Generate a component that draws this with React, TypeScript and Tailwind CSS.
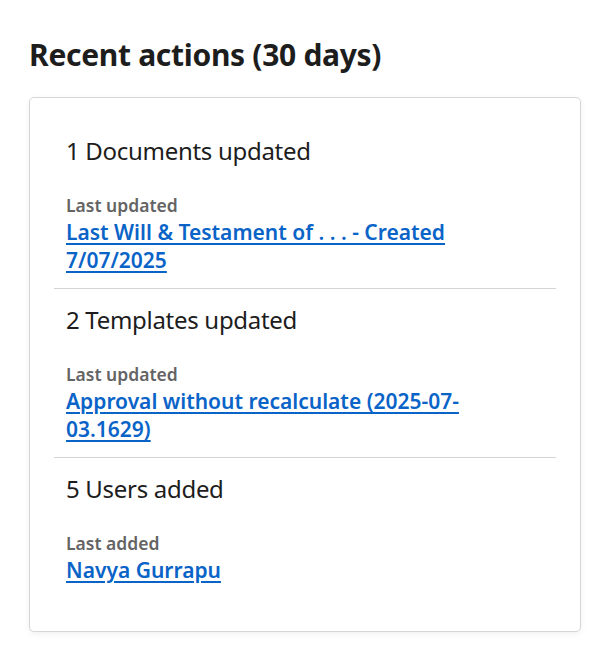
const sections = [
  {
    title: "1 Documents updated",
    label: "Last updated",
    lines: ["Last Will & Testament of . . . - Created", "7/07/2025"],
  },
  {
    title: "2 Templates updated",
    label: "Last updated",
    lines: ["Approval without recalculate (2025-07-", "03.1629)"],
  },
  {
    title: "5 Users added",
    label: "Last added",
    lines: ["Navya Gurrapu"],
  },
];

export default function App() {
  return (
    <div className="min-h-[660px] bg-white px-[29px] pt-[33px] font-['Noto_Sans',sans-serif] text-[#1d1d1d]">
      <h2 className="text-[30px] leading-[44px] font-bold tracking-[-0.3px]">Recent actions (30 days)</h2>

      <div className="mt-[20px] w-[552px] rounded-[5px] border border-[#d6d6d6] bg-white px-6 pt-[22px] pb-[33px] shadow-[0_2px_6px_rgba(0,0,0,0.06)]">
        {sections.map((s, i) => (
          <div
            key={s.title}
            className={`px-3 pt-[15px] pb-[14px] ${i < sections.length - 1 ? "border-b border-[#d4d4d4]" : ""}`}
          >
            <div className="text-[24px] leading-[32px] font-normal tracking-[-0.3px]">{s.title}</div>
            <div className="mt-[26px] text-[17.5px] leading-[24px] font-semibold text-[#646464]">{s.label}</div>
            <a
              href="#"
              className="mt-[1px] block text-[21px] leading-[28px] font-semibold text-[#0a64c8] underline decoration-[2px] underline-offset-[3px]"
            >
              {s.lines.map((l, j) => (
                <span key={j}>
                  {l}
                  {j < s.lines.length - 1 && <br />}
                </span>
              ))}
            </a>
          </div>
        ))}
      </div>
    </div>
  );
}
